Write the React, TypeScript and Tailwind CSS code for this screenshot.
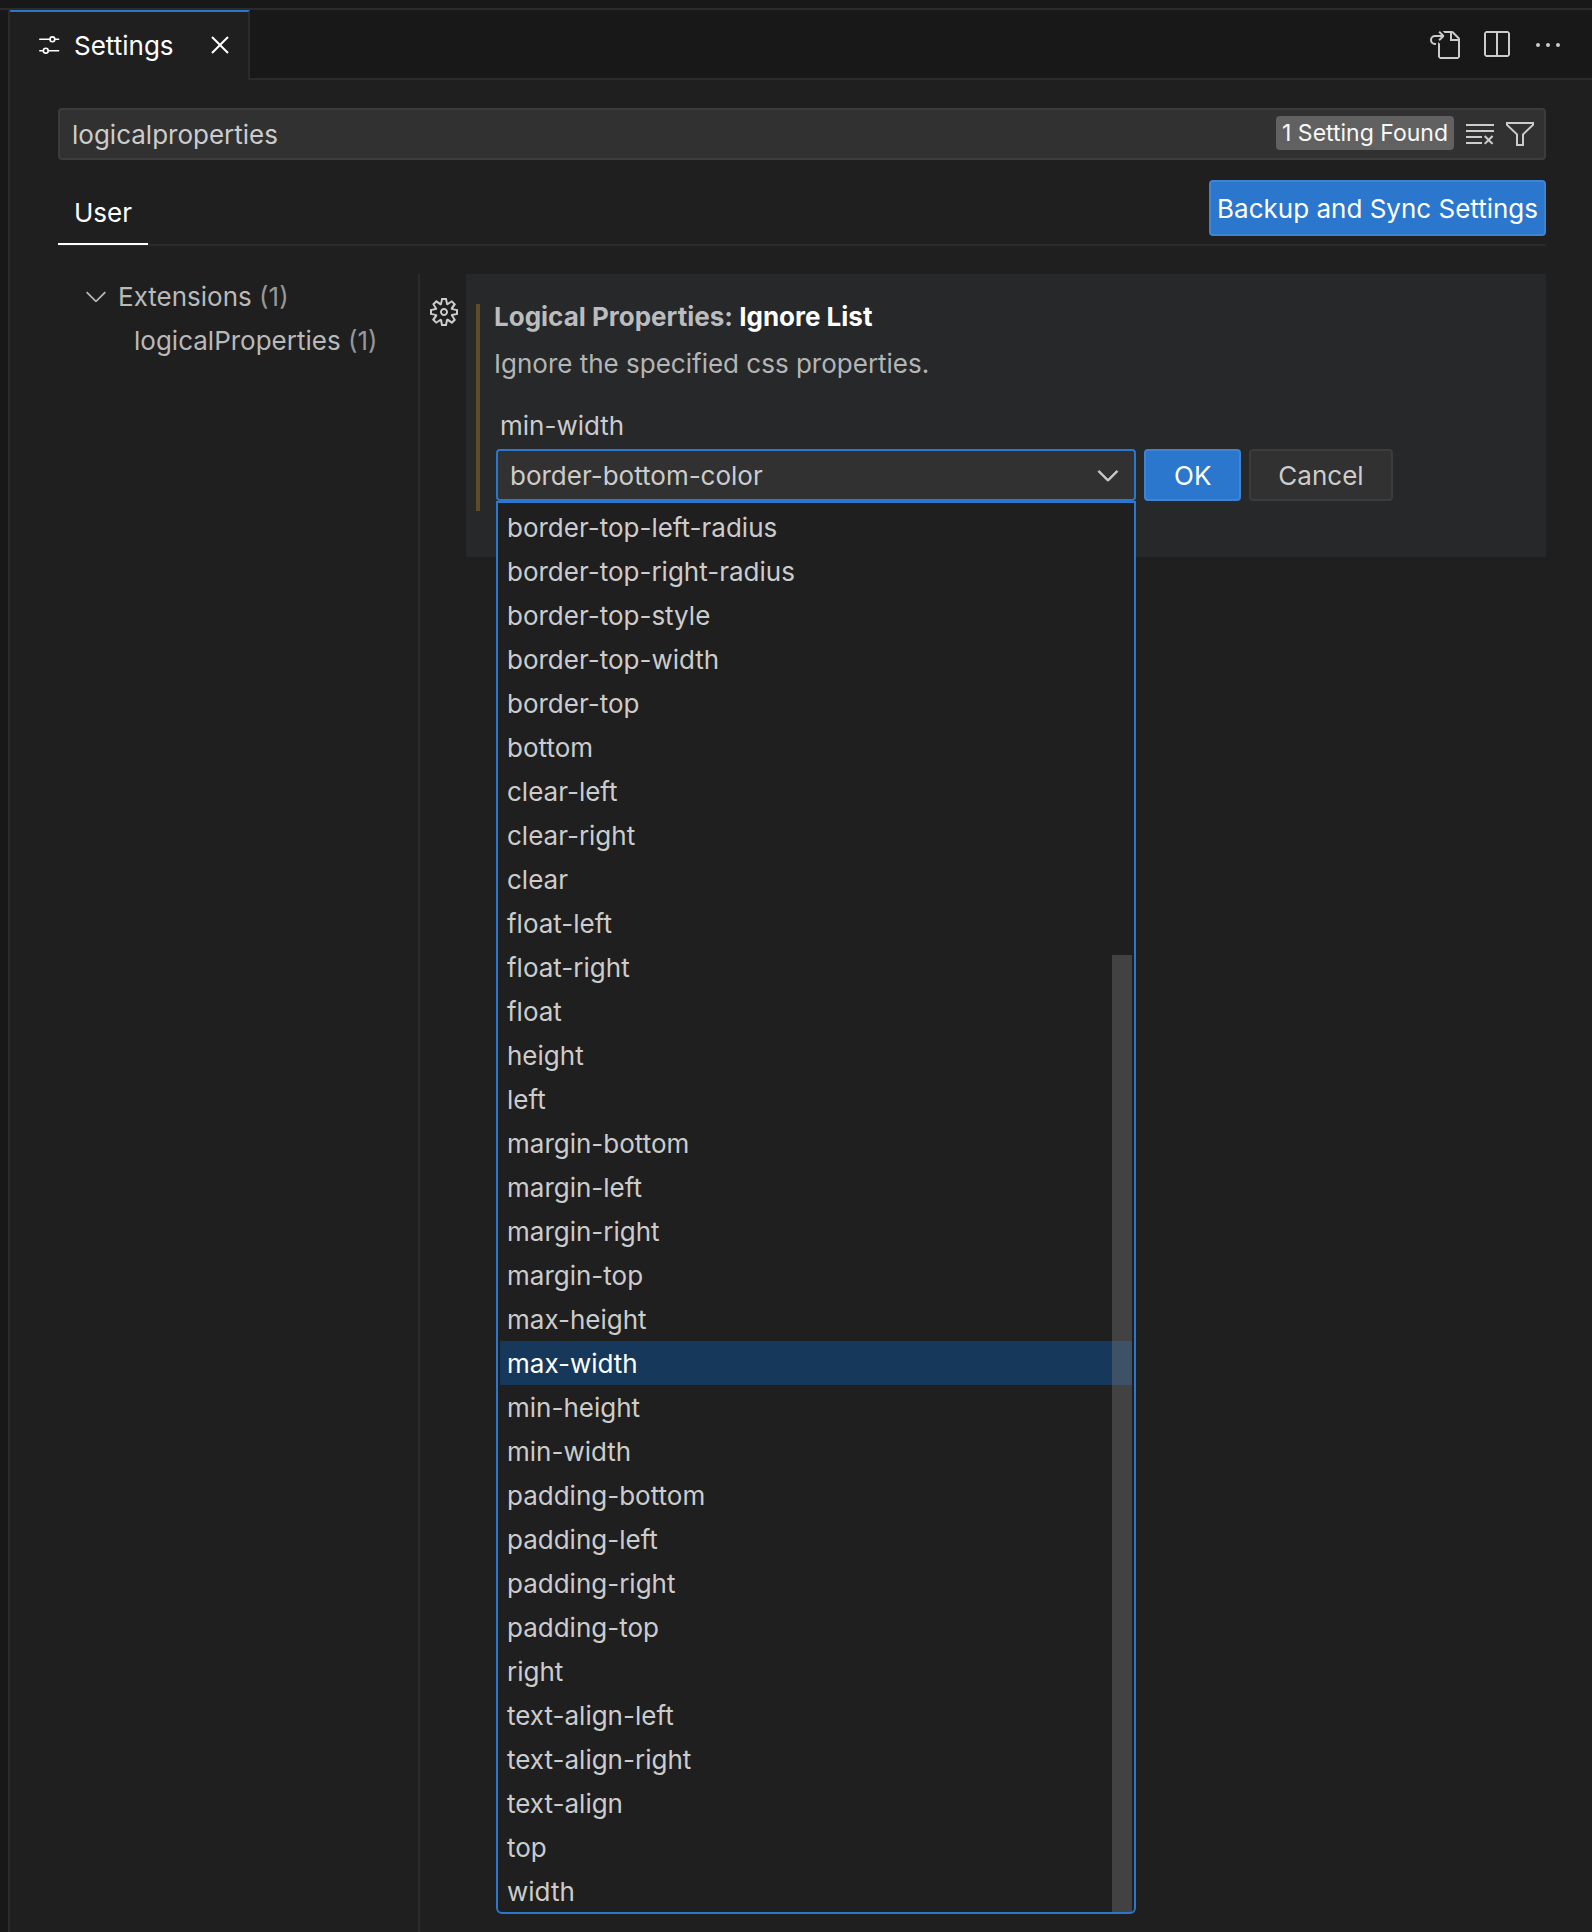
import React, { useState } from "react";

const icons = {
  goToFile:
    "M6 5.914l2.06-2.06v-.708L5.915 1l-.707.707.043.043.25.25 1 1h-3a2.5 2.5 0 0 0 0 5H4V7h-.5a1.5 1.5 0 1 1 0-3h3L5.207 5.293 5.914 6 6 5.914zM11 2H8.328l-1-1H12l.71.29 3 3L16 5v9l-1 1H6l-1-1V6.5l1 .847V14h9V6h-4V2zm1 0v3h3l-3-3z",
  split: "M14 1H3L2 2v11l1 1h11l1-1V2l-1-1zM8 13H3V2h5v11zm6 0H9V2h5v11z",
  ellipsis:
    "M4 8a1 1 0 1 1-2 0 1 1 0 0 1 2 0zm5 0a1 1 0 1 1-2 0 1 1 0 0 1 2 0zm5 0a1 1 0 1 1-2 0 1 1 0 0 1 2 0z",
  clearAll:
    "M10 12.6l.7.7 1.6-1.6 1.6 1.6.8-.7L13 11l1.7-1.6-.8-.8-1.6 1.7-1.6-1.7-.7.8 1.6 1.6-1.6 1.6zM1 4h14V3H1v1zm0 3h14V6H1v1zm8 2.5V9H1v1h8v-.5zM9 13v-1H1v1h8z",
  filter: "M15 2v1.67l-5 4.759V14H6V8.429l-5-4.76V2h14zM7 8v5h2V8l5-4.76V3H2v.24L7 8z",
  gear: "M9.1 4.4L8.6 2H7.4l-.5 2.4-.7.3-2-1.3-.9.8 1.3 2-.2.7-2.4.5v1.2l2.4.5.3.8-1.3 2 .8.8 2-1.3.8.3.4 2.3h1.2l.5-2.4.8-.3 2 1.3.8-.8-1.3-2 .3-.8 2.3-.4V7.4l-2.4-.5-.3-.8 1.3-2-.8-.8-2 1.3-.7-.2zM9.4 1l.5 2.4L12 2.1l2 2-1.4 2.1 2.4.4v2.8l-2.4.5L14 12l-2 2-2.1-1.4-.5 2.4H6.6l-.5-2.4L4 13.9l-2-2 1.4-2.1L1 9.4V6.6l2.4-.5L2.1 4l2-2 2.1 1.4.4-2.4h2.8zm.6 7c0 1.1-.9 2-2 2s-2-.9-2-2 .9-2 2-2 2 .9 2 2zM8 9c.6 0 1-.4 1-1s-.4-1-1-1-1 .4-1 1 .4 1 1 1z",
  chevronDown: "M7.976 10.072l4.357-4.357.62.618L8.284 11h-.618L3 6.333l.619-.618 4.357 4.357z",
  close:
    "M8 8.707l3.646 3.647.708-.707L8.707 8l3.647-3.646-.707-.708L8 7.293 4.354 3.646l-.707.708L7.293 8l-3.646 3.646.707.708L8 8.707z",
};

function Icon({ name, className = "" }: { name: keyof typeof icons; className?: string }) {
  return (
    <svg viewBox="0 0 16 16" fill="currentColor" aria-hidden="true" className={`size-8 shrink-0 ${className}`}>
      <path d={icons[name]} fillRule="evenodd" clipRule="evenodd" />
    </svg>
  );
}

function SlidersIcon() {
  return (
    <svg viewBox="0 0 32 32" fill="none" stroke="currentColor" strokeWidth="1.6" aria-hidden="true" className="size-8 shrink-0">
      <path d="M5.800 10.300h10.200M21.200 10.300h3.400M5.800 21.700h3.400M14.400 21.700h10.200" strokeLinecap="round" />
      <circle cx="18.400" cy="10.300" r="2.400" />
      <circle cx="11.800" cy="21.700" r="2.400" />
    </svg>
  );
}

const properties = [
  "border-top-left-radius",
  "border-top-right-radius",
  "border-top-style",
  "border-top-width",
  "border-top",
  "bottom",
  "clear-left",
  "clear-right",
  "clear",
  "float-left",
  "float-right",
  "float",
  "height",
  "left",
  "margin-bottom",
  "margin-left",
  "margin-right",
  "margin-top",
  "max-height",
  "max-width",
  "min-height",
  "min-width",
  "padding-bottom",
  "padding-left",
  "padding-right",
  "padding-top",
  "right",
  "text-align-left",
  "text-align-right",
  "text-align",
  "top",
  "width",
];

function TabBar() {
  return (
    <header className="flex h-[70px] bg-[#181818]">
      <div
        role="tab"
        aria-selected="true"
        className="flex items-center border-t-2 border-r-2 border-t-[#2b77cd] border-r-[#2b2b2b] bg-[#1f1f1f] pr-3 pb-0.5 pl-6 text-white"
      >
        <SlidersIcon />
        <span className="ml-2 w-[130px] pt-0.5">Settings</span>
        <button type="button" aria-label="Close">
          <Icon name="close" />
        </button>
      </div>
      <div className="flex flex-1 items-center justify-end gap-5 border-b-2 border-[#2b2b2b] pt-0.5 pr-7 text-[#cccccc]">
        <button type="button" aria-label="Open settings file">
          <Icon name="goToFile" />
        </button>
        <button type="button" aria-label="Split editor">
          <Icon name="split" />
        </button>
        <button type="button" aria-label="More actions">
          <Icon name="ellipsis" />
        </button>
      </div>
    </header>
  );
}

function SearchBox() {
  const [query, setQuery] = useState("logicalproperties");
  return (
    <div className="flex h-[52px] items-center rounded border-2 border-[#3c3c3c] bg-[#313131] pr-2">
      <input
        aria-label="Search settings"
        value={query}
        onChange={(e) => setQuery(e.target.value)}
        className="h-full min-w-0 flex-1 bg-transparent pl-3 text-[#cccccc] outline-none"
      />
      <span className="mb-0.5 flex h-[34px] items-center rounded bg-[#616161] px-1.5 text-[23px] text-[#f8f8f8]">
        1 Setting Found
      </span>
      <button type="button" aria-label="Clear search" className="ml-2.5 text-[#cccccc]">
        <Icon name="clearAll" />
      </button>
      <button type="button" aria-label="Filter settings" className="ml-2 text-[#cccccc]">
        <Icon name="filter" />
      </button>
    </div>
  );
}

function PropertySelect() {
  const [value, setValue] = useState("border-bottom-color");
  return (
    <div className="relative w-[640px]">
      <select
        id="ignore-item"
        value={value}
        onChange={(e) => setValue(e.target.value)}
        className="block h-[52px] w-full appearance-none rounded border-2 border-[#2b77cd] bg-[#313131] pt-0.5 pl-3 text-[#cccccc] outline-none"
      >
        <option>border-bottom-color</option>
        {properties.map((p) => (
          <option key={p}>{p}</option>
        ))}
      </select>
      <Icon
        name="chevronDown"
        className="pointer-events-none absolute top-2.5 right-3 stroke-[#cccccc] text-[#cccccc] [stroke-width:0.4]"
      />
      <div className="absolute top-full left-0 z-10 w-full rounded-b-md border-2 border-[#2b77cd] bg-[#1f1f1f] px-0.5 pt-0.5">
        <ul role="listbox" aria-label="Properties" className="-mb-px">
          {properties.map((p) => (
            <li
              key={p}
              role="option"
              aria-selected={p === "max-width"}
              className="flex h-11 items-center pt-0.5 pl-[7px] text-[#cccccc] aria-selected:bg-[#16395b] aria-selected:text-white"
            >
              {p}
            </li>
          ))}
        </ul>
        <div className="absolute top-[452px] right-0.5 bottom-0 w-5 bg-[#797979]/40" />
      </div>
    </div>
  );
}

function SettingItem() {
  return (
    <section className="flex flex-1 items-start self-start">
      <button type="button" aria-label="More actions for setting" className="mt-[22px] mr-1.5 ml-2 text-[#cccccc]">
        <Icon name="gear" />
      </button>
      <div className="h-[283px] flex-1 bg-[#26282a] pt-[30px] pl-2.5">
        <div className="h-[207px] border-l-4 border-[#5f4a2a] pl-[14px]">
          <h2 className="h-6 leading-[26px] font-bold text-[#bcbcbd]">
            Logical Properties: <span className="text-white">Ignore List</span>
          </h2>
          <p className="mt-6 leading-6 text-[#b4b5b5]">Ignore the specified css properties.</p>
          <label htmlFor="ignore-item" className="mt-[38px] block pl-1.5 leading-6 text-[#cccccc]">
            min-width
          </label>
          <div className="mt-[11px] ml-0.5 flex gap-2">
            <PropertySelect />
            <button type="button" className="h-[52px] rounded border-2 border-[#4083d1] bg-[#2b77cd] px-7 pt-0.5 text-white">
              OK
            </button>
            <button
              type="button"
              className="h-[52px] rounded border-2 border-[#3c3c3c] bg-[#313131] px-[27px] pt-0.5 text-[#cccccc]"
            >
              Cancel
            </button>
          </div>
        </div>
      </div>
    </section>
  );
}

export default function App() {
  return (
    <div className="flex min-h-screen flex-col bg-[#181818] pt-2 font-['Inter',sans-serif] text-[26px] leading-8">
      <div className="flex flex-1 flex-col border-t-2 border-[#2b2b2b] pl-2">
        <div className="flex flex-1 flex-col border-l-2 border-[#2b2b2b] bg-[#1f1f1f]">
          <TabBar />
          <main className="flex flex-1 flex-col pt-7 pr-[46px] pl-12">
            <SearchBox />
            <div className="flex h-[86px] items-end justify-between border-b-2 border-[#2b2b2b]">
              <button type="button" className="-mb-px border-b-2 border-white px-4 pb-[14px] text-white">
                User
              </button>
              <button
                type="button"
                className="mb-2 h-14 rounded border-2 border-[#4083d1] bg-[#2b77cd] px-1.5 pt-0.5 text-white"
              >
                Backup and Sync Settings
              </button>
            </div>
            <div className="flex flex-1 pt-7">
              <nav aria-label="Settings groups" className="w-[362px] border-r-2 border-[#2b2b2b] text-[#b9b9b9]">
                <a href="#extensions" className="flex h-11 items-center pl-[22px]">
                  <Icon name="chevronDown" />
                  <span className="ml-1.5 pt-0.5">
                    Extensions <span className="text-[#979797]">(1)</span>
                  </span>
                </a>
                <a href="#logical-properties" className="flex h-11 items-center pl-[76px]">
                  <span className="pt-0.5">
                    logicalProperties <span className="text-[#979797]">(1)</span>
                  </span>
                </a>
              </nav>
              <SettingItem />
            </div>
          </main>
        </div>
      </div>
    </div>
  );
}
